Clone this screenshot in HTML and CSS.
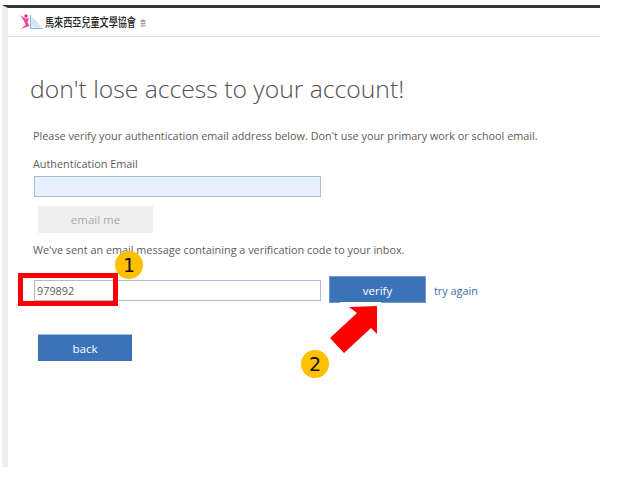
FILE: index.html
```html
<!DOCTYPE html>
<html lang="en">
<head>
    <meta charset="UTF-8">
    <meta name="viewport" content="width=device-width, initial-scale=1.0">
    <title>Verify authentication email</title>
    <link rel="stylesheet" href="styles.css">
</head>
<body>
    <div class="frame">
        <div class="header">
            <svg class="logo-icon" width="24" height="18" viewBox="0 0 24 18">
                <path d="M10 3 L10 15 L22 15 C19 10 15 6 10 3 Z" fill="#e3eef9"/>
                <path d="M10.5 2 L10.5 15.5 L22.5 15.5" fill="none" stroke="#7db0e0" stroke-width="1"/>
                <path d="M12 7 L17 14 M13 5.5 L20 14 M12 10 L15 14" stroke="#b5d2ee" stroke-width="0.7"/>
                <circle cx="6" cy="3" r="1.8" fill="#e8308a"/>
                <path d="M0 2 L5 5.5 L9 5 L7.5 9 L9.5 13 L1 16 L5.5 12 L4 8 Z" fill="#ee4a9a"/>
            </svg>
            <span class="logo-text">馬來西亞兒童文學協會</span>
            <span class="logo-mark">京</span>
        </div>

        <div class="content">
            <h1>don't lose access to your account!</h1>
            <p class="intro">Please verify your authentication email address below. Don't use your primary work or school email.</p>

            <label class="field-label" for="authEmail">Authentication Email</label>
            <input class="text-box text-box-filled" type="text" id="authEmail">

            <button class="btn btn-disabled" type="button">email me</button>

            <p class="sent">We've sent an email message containing a verification code to your inbox.</p>

            <div class="code-row">
                <input class="text-box text-box-code" type="text" value="979892">
                <button class="btn btn-primary btn-verify" type="button">verify</button>
                <a class="try-again" href="#">try again</a>
            </div>

            <button class="btn btn-primary btn-back" type="button">back</button>
        </div>
    </div>

    <!-- annotations drawn over the screenshot -->
    <div class="red-box"></div>
    <div class="step step-one">1</div>
    <div class="step step-two">2</div>
    <div class="verify-underline"></div>
    <svg class="arrow" width="617" height="480" viewBox="0 0 617 480">
        <polygon points="349,307 377,306 377,334 371,328 344,353 330,338 357,313" fill="#ff0000"/>
    </svg>
</body>
</html>
```

FILE: styles.css
```css
body {
    margin: 0;
    background-color: #fff;
    font-family: "Open Sans", "Liberation Sans", sans-serif;
    color: #5c5c5c;
}
.frame {
    width: 592px;
    height: 459px;
    margin: 5px 0 0 2px;
    border-top: 3px solid #333;
    border-left: 6px solid #eee;
}
.header {
    display: flex;
    align-items: center;
    height: 28px;
    padding-left: 12px;
    border-bottom: 1px solid #ddd;
}
.logo-icon {
    margin-right: 1px;
}
.logo-text {
    font-family: "Noto Sans CJK TC", sans-serif;
    font-size: 9.1px;
    font-weight: 500;
    color: #222;
    transform: scaleY(1.35);
}
.logo-mark {
    margin-left: 4px;
    font-family: "Noto Sans CJK TC", sans-serif;
    font-size: 6px;
    color: #555;
    transform: scaleY(1.35);
}
.content {
    padding: 0 0 0 25px;
}
h1 {
    margin: 34px 0 0 -3px;
    font-size: 24.7px;
    line-height: 36px;
    font-weight: 300;
    color: #505050;
}
.intro {
    margin: 21px 0 0;
    font-size: 10.85px;
    line-height: 15px;
}
.field-label {
    display: block;
    margin-top: 13px;
    font-size: 10.85px;
    line-height: 15px;
}
.text-box {
    box-sizing: border-box;
    display: block;
    width: 287px;
    height: 21px;
    margin: 0 0 0 1px;
    padding: 0 2px;
    border: 1px solid #a6bdd7;
    border-radius: 0;
    outline: none;
    font-family: inherit;
    font-size: 10.85px;
    color: #5c5c5c;
}
.text-box-filled {
    margin-top: 5px;
    background-color: #e8f0fe;
}
.text-box-code {
    margin-top: 4px;
}
.btn {
    display: block;
    box-sizing: border-box;
    border: none;
    font-family: inherit;
    font-size: 11.5px;
    height: 27px;
    padding: 0;
}
.btn-disabled {
    width: 115px;
    margin: 9px 0 0 5px;
    background-color: #efefef;
    color: #aaa;
}
.btn-primary {
    background-color: #3b73b9;
    color: #fff;
}
.sent {
    margin: 9px 0 0;
    font-size: 10.85px;
    line-height: 15px;
}
.code-row {
    display: flex;
    align-items: flex-start;
    margin-top: 19px;
}
.btn-verify {
    width: 97px;
    margin-left: 8px;
    padding-top: 1px;
    border: 1px solid #6f9bd0;
}
.try-again {
    margin: 7px 0 0 8px;
    font-size: 10.85px;
    line-height: 15px;
    color: #3b6ea8;
    text-decoration: none;
}
.btn-back {
    width: 94px;
    margin: 31px 0 0 5px;
    border-top: 1px solid #9fc0e6;
}
.red-box {
    position: absolute;
    left: 18px;
    top: 273px;
    width: 90px;
    height: 23px;
    border: 5px solid #ff0000;
}
.step {
    position: absolute;
    width: 28px;
    height: 28px;
    border-radius: 50%;
    background-color: #ffc000;
    color: #111;
    font-family: "DejaVu Sans", sans-serif;
    font-size: 19px;
    line-height: 28px;
    text-align: center;
}
.step-one {
    left: 115px;
    top: 251px;
}
.step-two {
    left: 301px;
    top: 350px;
}
.verify-underline {
    position: absolute;
    left: 340px;
    top: 302px;
    width: 41px;
    height: 2px;
    background-color: #fff;
}
.arrow {
    position: absolute;
    left: 0;
    top: 0;
    pointer-events: none;
}
```
